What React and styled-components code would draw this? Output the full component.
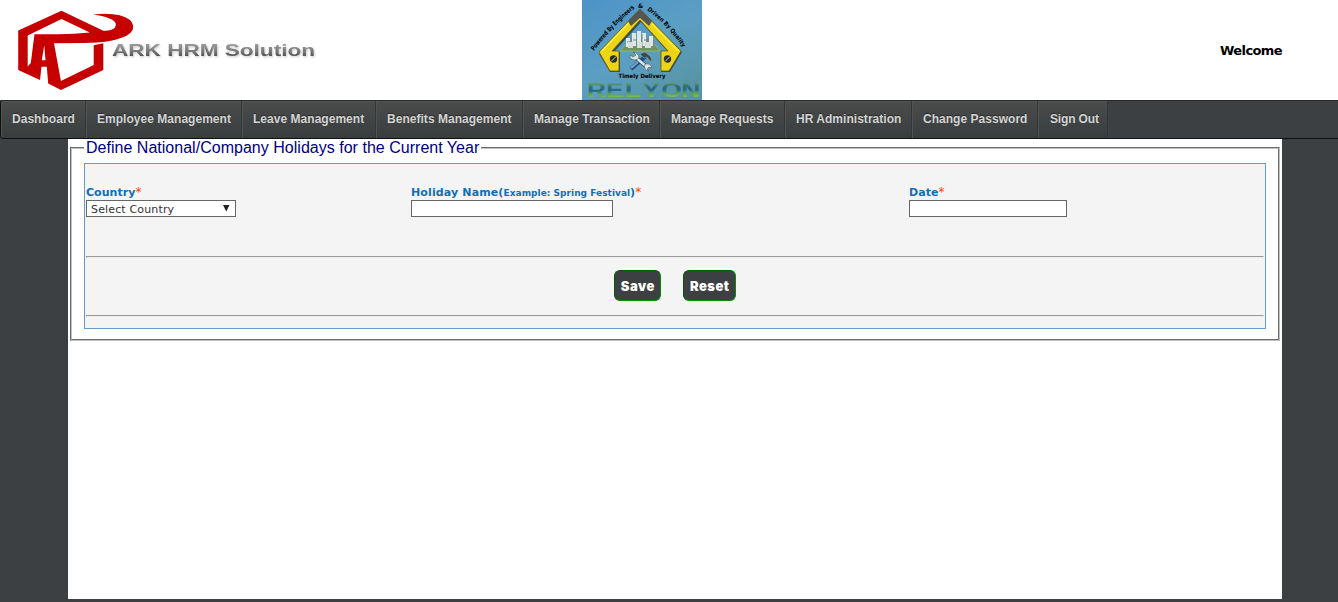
import React from "react";
import styled, { createGlobalStyle } from "styled-components";

const GlobalStyle = createGlobalStyle`
  * { box-sizing: border-box; }
  body {
    margin: 0;
    background: #3c4042;
    font-family: Verdana, "DejaVu Sans", sans-serif;
    font-size: 11px;
    overflow: hidden;
  }
`;

const Header = styled.header`
  display: grid;
  grid-template-columns: 582px 120px 1fr;
  height: 100px;
  background: #fff;
`;

const Welcome = styled.div`
  align-self: center;
  justify-self: end;
  padding-right: 56px;
  font-size: 13px;
  font-weight: bold;
  letter-spacing: -0.6px;
  color: #000;
`;

const Nav = styled.nav`
  display: flex;
  height: 39px;
  border: 1px solid #0f1011;
  border-top-color: #292c2e;
  border-right: 0;
  border-radius: 4px 0 0 4px;
`;

const NavItem = styled.a`
  width: ${(p) => p.$width}px;
  padding-left: 11px;
  font: bold 12px/36px "Liberation Sans", Arial, sans-serif;
  letter-spacing: 0.03px;
  white-space: nowrap;
  color: #d4d4d4;
  text-shadow: 0 -1px 1px rgba(0, 0, 0, 0.45);
  background: linear-gradient(#4b4d4c, #393d3e);
  border-right: 1px solid #333738;
  box-shadow: inset 1px 1px 0 #505352;

  &:first-child { border-radius: 3px 0 0 3px; }
  &:last-child { letter-spacing: -0.15px; padding-left: 12px; }
`;

const Page = styled.main`
  width: 1214px;
  height: 460px;
  margin-left: 68px;
  background: #fff;
`;

const Group = styled.fieldset`
  margin: 0 2px;
  padding: 6px 12px 10px;
  border: 2px groove #c0c0c0;
  min-width: 0;
`;

const Legend = styled.legend`
  height: 18px;
  padding: 0 2px;
  font: 16px/18px "Liberation Sans", Arial, sans-serif;
  letter-spacing: 0.02px;
  color: #000080;
`;

const Panel = styled.div`
  height: 166px;
  padding: 20px 1px 0;
  border: 1px solid #6699cc;
  background: #f4f4f4;
`;

const Fields = styled.div`
  display: grid;
  grid-template-columns: 325px 498px 1fr;
  height: 72px;
`;

const Label = styled.label`
  display: block;
  height: 16px;
  padding-top: 1px;
  font-size: 11px;
  line-height: 16px;
  font-weight: bold;
  letter-spacing: ${(p) => p.$spacing || "0.05px"};
  white-space: nowrap;
  color: #116fb5;

  small { font-size: 9px; letter-spacing: 0.03px; }
`;

const Star = styled.span`
  font-size: 12px;
  line-height: 1;
  font-weight: normal;
  color: #ff4500;
`;

const Input = styled.input`
  display: block;
  width: ${(p) => p.$width}px;
  height: 17px;
  padding: 0 4px;
  border: 1px solid #666;
  border-radius: 0;
  background: #fff;
`;

const Select = styled.div`
  display: flex;
  justify-content: space-between;
  align-items: flex-start;
  width: 150px;
  height: 17px;
  padding: 1px 5px 0 4px;
  border: 1px solid #666;
  background: #fff;
  font-size: 11px;
  line-height: 15px;
  letter-spacing: 0.15px;
  color: #333;

  svg { margin-top: 2px; }
`;

const Rule = styled.hr`
  height: 2px;
  margin: 0;
  border: 1px solid #9a9a9a;
  border-bottom-color: #eee;
  border-right-color: #eee;
`;

const Actions = styled.div`
  display: flex;
  justify-content: center;
  gap: 22px;
  height: 57px;
  padding-top: 12px;
`;

const Button = styled.button`
  width: ${(p) => p.$width}px;
  height: 31px;
  padding: 0;
  border: 1px solid;
  border-color: #005800 #009000 #009000 #005800;
  border-radius: 6px;
  background: #3c4042;
  color: #fff;
  font: 900 13px/28px Inter, "Arial Black", sans-serif;
  letter-spacing: 0.5px;
  text-indent: 0.5px;
`;

function ArkLogo() {
  return (
    <svg width="330" height="100" viewBox="0 0 330 100" role="img" aria-label="ARK HRM Solution">
      <defs>
        <linearGradient id="silver" x1="0" y1="0" x2="0" y2="1">
          <stop offset="0" stopColor="#aaa" />
          <stop offset="0.55" stopColor="#777" />
          <stop offset="1" stopColor="#333" />
        </linearGradient>
        <filter id="soft" x="-5%" y="-20%" width="110%" height="150%">
          <feDropShadow dx="1" dy="1.2" stdDeviation="0.8" floodColor="#777" floodOpacity="0.4" />
        </filter>
      </defs>
      <path fill="#c60000" d="M61.500 10.800L103.300 30.700Q111.500 31 115 27.500Q120.500 18.500 93 14.500Q119 11.800 130 20Q138 29 126 36Q111 43.200 82 42.900L54 43.300L60.900 81L93.700 65V45.200L103.300 43.300V70L61 90L48.200 83.500L46.800 66.700H41.500L40 80L18.200 70V30.500Z" />
      <g fill="#fff">
        <path d="M61.500 19L89.800 32.500Q72 34.500 53 34.200H34.500L30.800 63L27.700 66.500V35.400Z" />
        <path d="M44.200 45.300L45.500 60.200H41.800Z" />
      </g>
      <text x="112" y="56" textLength="203" lengthAdjust="spacingAndGlyphs" fontFamily="Liberation Sans, Arial, sans-serif" fontSize="17" fontWeight="bold" fill="url(#silver)" filter="url(#soft)">
        ARK HRM Solution
      </text>
    </svg>
  );
}

function RelyonLogo() {
  const sans = "DejaVu Sans, Verdana, sans-serif";
  return (
    <svg width="120" height="100" viewBox="0 0 120 100" role="img" aria-label="Relyon">
      <defs>
        <linearGradient id="sky" x1="0" y1="0" x2="0.7" y2="1">
          <stop offset="0" stopColor="#4c93c7" />
          <stop offset="0.55" stopColor="#5c9fc4" />
          <stop offset="1" stopColor="#5795a5" />
        </linearGradient>
        <linearGradient id="letters" x1="0" y1="0" x2="0.05" y2="1">
          <stop offset="0.2" stopColor="#6fae55" />
          <stop offset="0.42" stopColor="#2f6c80" />
          <stop offset="0.55" stopColor="#28658c" />
          <stop offset="0.68" stopColor="#55a050" />
          <stop offset="0.82" stopColor="#79b84d" />
        </linearGradient>
        <path id="left-slope" d="M12 51Q30 27 53 8" />
        <path id="right-slope" d="M65 10Q86 25 101 48" />
      </defs>
      <rect width="120" height="100" fill="url(#sky)" />
      <path d="M59 10L100 52L88 72H79V52H86L59 22L32 52H38V72H28L17 54Z" fill="#253238" opacity="0.75" />
      <path d="M58 9L99 51L87 71H79V51H86L58 20L30 51H37V71H28L17 52Z" fill="#edd414" stroke="#5e5a18" strokeWidth="0.8" />
      <path d="M58 9L70 21L67 26L58 18L49 26L46 21Z" fill="#555652" />
      <path d="M20 51L46 24M70 24L96 51" stroke="#fff24b" strokeWidth="1.200" />
      <path d="M46 42H71L78 51H38Z" fill="#71945b" stroke="#8cb76c" />
      <path d="M44 39H72V46H44Z" fill="#70888a" />
      <path d="M44 38H48V47H44ZM50 33H54V46H50ZM55 31H59V46H55ZM60 33H64V46H60ZM67 36H71V46H67Z" fill="#e1e8e5" />
      <path d="M49 37V46M60 34V46M66 36V46M72 40V47M45 42H48M51 40H54M62 40H65" stroke="#758687" />
      <path d="M46 42H51V48H46ZM55 42H60V48H55ZM63 42H69V48H63Z" fill="#d5dfdb" />
      <circle cx="31.500" cy="59" r="3.700" fill="#2c2e29" />
      <circle cx="85.500" cy="59" r="3.700" fill="#2c2e29" />
      <path d="M29 61.500L34 56.500M83 61.500L88 56.500" stroke="#d5d3a0" />
      <path d="M52 56L66 68" stroke="#304750" strokeWidth="4" />
      <path d="M49 69L64 56" stroke="#254d7a" strokeWidth="4" />
      <path d="M49 68L56 62" stroke="#74a5d1" strokeWidth="2" />
      <path d="M52 56L66 68" stroke="#e0e7e5" strokeWidth="2.500" />
      <path d="M48 55L51 57L54 55L51 52Q57 53 57 58Q53 62 48 58ZM63 64Q69 63 70 68L67 67L65 69L67 71Q61 70 63 64Z" fill="#dbe5e3" stroke="#40545b" strokeWidth=".6" />
      <path d="M58 54L63 52L69 57L70 62L67 60L65 57L62 58Z" fill="#3d484b" stroke="#9caeae" strokeWidth=".5" />
      <g fontFamily={sans} fontWeight="bold" fontSize="6.500" fill="#000">
        <text><textPath href="#left-slope" textLength="59" lengthAdjust="spacingAndGlyphs">Powered By Engineers</textPath></text>
        <text x="56" y="8" fontSize="6">&amp;</text>
        <text fontSize="6"><textPath href="#right-slope" textLength="52" lengthAdjust="spacingAndGlyphs">Driven By Quality</textPath></text>
        <text x="36.500" y="77.500" fontSize="5.800" textLength="47" lengthAdjust="spacingAndGlyphs">Timely Delivery</text>
      </g>
      <text transform="scale(1.25 1)" x="4 19.200 34.400 48.500 63.500 79.500" y="97" fontFamily="Liberation Sans, Arial, sans-serif" fontSize="21" fontWeight="bold" fill="url(#letters)">RELYON</text>
    </svg>
  );
}

const navigation = [
  ["Dashboard", 85],
  ["Employee Management", 156],
  ["Leave Management", 134],
  ["Benefits Management", 147],
  ["Manage Transaction", 137],
  ["Manage Requests", 125],
  ["HR Administration", 127],
  ["Change Password", 126],
  ["Sign Out", 70],
];

export default function App() {
  return (
    <>
      <GlobalStyle />
      <Header>
        <ArkLogo />
        <RelyonLogo />
        <Welcome>Welcome</Welcome>
      </Header>
      <Nav>
        {navigation.map(([label, width]) => (
          <NavItem key={label} $width={width}>{label}</NavItem>
        ))}
      </Nav>
      <Page>
        <Group>
          <Legend>Define National/Company Holidays for the Current Year</Legend>
          <Panel>
            <Fields>
              <div>
                <Label>Country<Star>*</Star></Label>
                <Select role="combobox" aria-label="Country">
                  <span>Select Country</span>
                  <svg width="8" height="9" viewBox="0 0 8 9" aria-hidden="true">
                    <path d="M1 1H7.500L4.250 7.500Z" fill="#222" />
                  </svg>
                </Select>
              </div>
              <div>
                <Label $spacing="0.13px">Holiday Name(<small>Example: Spring Festival</small>)<Star>*</Star></Label>
                <Input $width={202} aria-label="Holiday Name" />
              </div>
              <div>
                <Label>Date<Star>*</Star></Label>
                <Input $width={158} aria-label="Date" />
              </div>
            </Fields>
            <Rule />
            <Actions>
              <Button $width={47}>Save</Button>
              <Button $width={53}>Reset</Button>
            </Actions>
            <Rule />
          </Panel>
        </Group>
      </Page>
    </>
  );
}
